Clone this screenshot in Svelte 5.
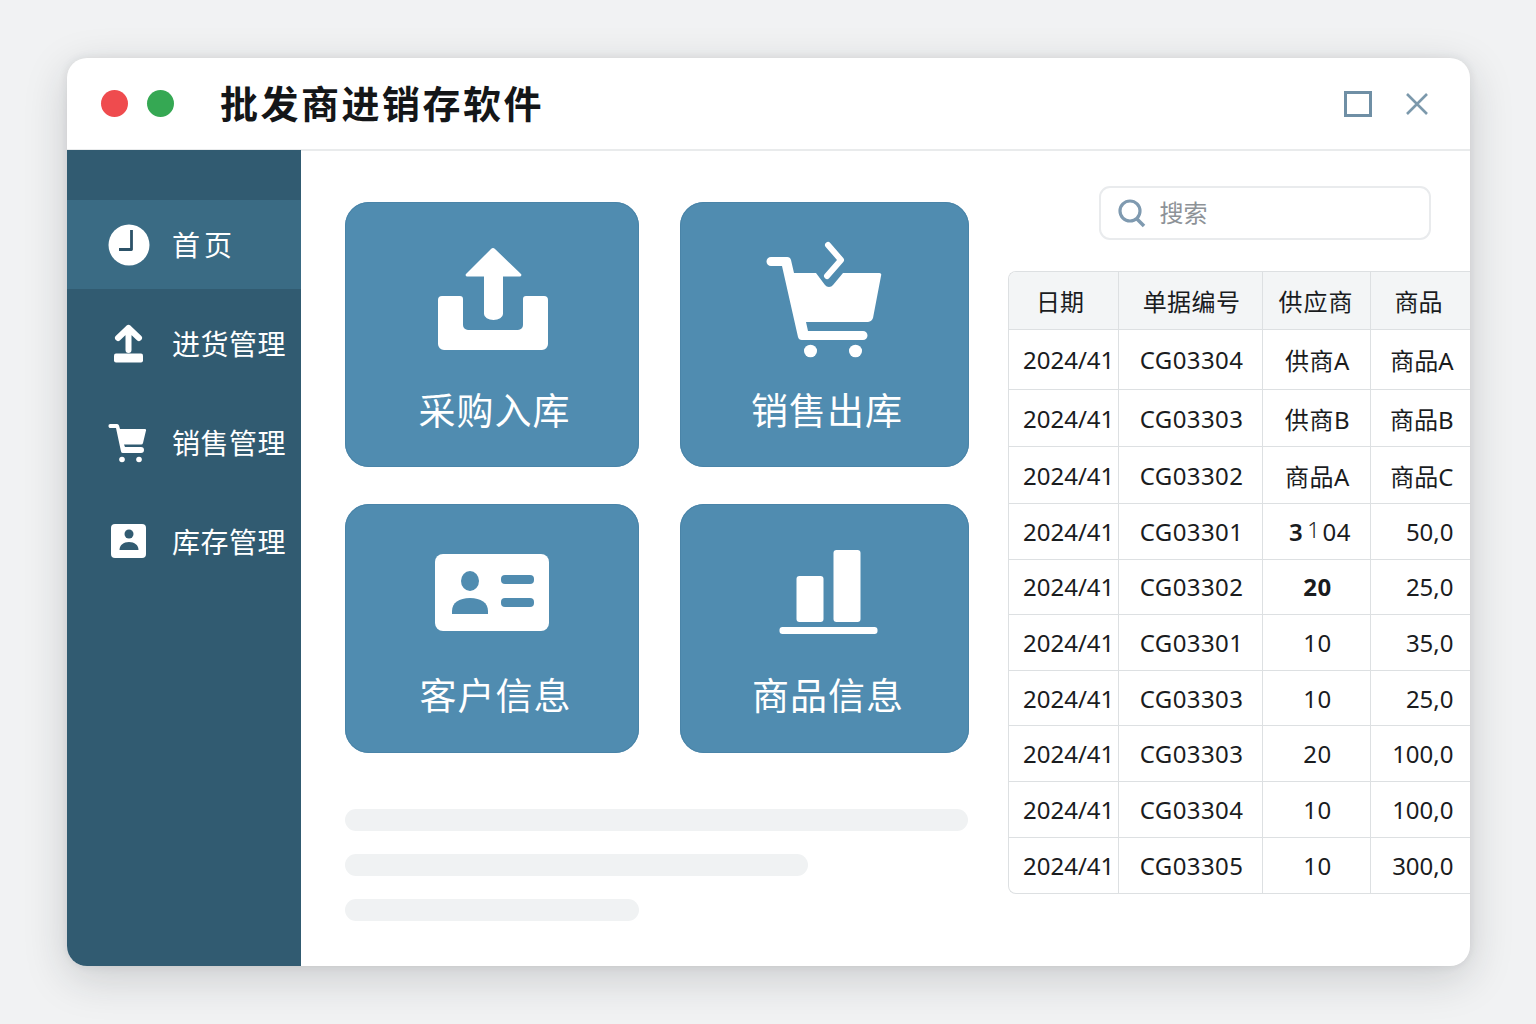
<script>
  const nav = ['首页', '进货管理', '销售管理', '库存管理'];
  const rows = [
    ['2024/41', 'CG03304', '供商A', '商品A', 'r1'],
    ['2024/41', 'CG03303', '供商B', '商品B', 'r2'],
    ['2024/41', 'CG03302', '商品A', '商品C', 'r2'],
    ['2024/41', 'CG03301', '3104', '50,0', ''],
    ['2024/41', 'CG03302', '20', '25,0', 'r5'],
    ['2024/41', 'CG03301', '10', '35,0', ''],
    ['2024/41', 'CG03303', '10', '25,0', ''],
    ['2024/41', 'CG03303', '20', '100,0', ''],
    ['2024/41', 'CG03304', '10', '100,0', ''],
    ['2024/41', 'CG03305', '10', '300,0', '']
  ];
</script>

<div class="page">
  <div class="window">
    <header class="titlebar">
      <span class="dot red"></span>
      <span class="dot green"></span>
      <h1>批发商进销存软件</h1>
      <div class="controls">
        <svg width="28" height="26" viewBox="0 0 28 26"><rect x="1.500" y="1.500" width="25" height="23" fill="none" stroke="#6f8fa5" stroke-width="3"/></svg>
        <svg width="24" height="24" viewBox="0 0 24 24"><path d="M2 2 22 22M22 2 2 22" fill="none" stroke="#7c99ac" stroke-width="2.600"/></svg>
      </div>
    </header>
    <div class="body">
      <aside class="sidebar">
        {#each nav as label, i}
          <div class="nav" class:active={i === 0}>
            <svg class="navicon" viewBox="0 0 42 42">
              {#if i === 0}
                <circle cx="21" cy="21" r="20.500" fill="#fff"/>
                <path d="M23.500 6v19.500H11" fill="none" stroke="#2c5268" stroke-width="2.800" stroke-linejoin="round"/>
              {:else if i === 1}
                <path d="M10 15 20.500 5 31 15M20.500 5V27" fill="none" stroke="#fff" stroke-width="6" stroke-linejoin="round" stroke-linecap="round"/>
                <rect x="6" y="30.500" width="29" height="9" rx="2" fill="#fff"/>
              {:else if i === 2}
                <path d="M2 2h7a2 2 0 0 1 2 1.500L12 7h25a1 1 0 0 1 1 1.500L35 21a2 2 0 0 1-2 1.500H16l1 2.500h16a2.500 2.500 0 0 1 0 6H15a2 2 0 0 1-2-1.500L8 6H3a2 2 0 0 1-1-4Z" fill="#fff"/>
                <circle cx="14" cy="37.500" r="2.800" fill="#fff"/>
                <circle cx="31" cy="37.500" r="2.800" fill="#fff"/>
              {:else}
                <rect x="3" y="3" width="35" height="34" rx="4" fill="#fff"/>
                <circle cx="21" cy="13" r="4.500" fill="#315b71"/>
                <path d="M11.500 29c0-5 4-8 9.500-8s9.500 3 9.500 8Z" fill="#315b71"/>
              {/if}
            </svg>
            <span class:wide={i === 0}>{label}</span>
          </div>
        {/each}
      </aside>
      <main class="main">
        <section class="left">
          <div class="grid">
            <div class="card">
              <svg class="icon" viewBox="0 0 120 120">
                <path d="M59 9a3 3 0 0 1 4 0l26 25a1.500 1.500 0 0 1-1 2.500H71V74a9.500 6 0 0 1-19 0V36.500H35a1.500 1.500 0 0 1-1-2.500Z" fill="#fff"/>
                <path d="M10 56h18a3 3 0 0 1 3 3v26a5 5 0 0 0 5 5h50a5 5 0 0 0 5-5V59a3 3 0 0 1 3-3h18a4 4 0 0 1 4 4v44a6 6 0 0 1-6 6H12a6 6 0 0 1-6-6V60a4 4 0 0 1 4-4Z" fill="#fff"/>
              </svg>
              <span>采购入库</span>
            </div>
            <div class="card">
              <svg class="icon" viewBox="0 0 120 120">
                <path d="M6 17H22a4 4 0 0 1 4 3L29 33H51L60 45a5 5 0 0 0 8 0L78 33H114a2 2 0 0 1 2 3L108 78a6 6 0 0 1-5 4H41L43 91H98a4.500 4.500 0 0 1 0 9H37a4 4 0 0 1-4-3L17 26H6a4.500 4.500 0 0 1 0-9Z" fill="#fff"/>
                <path d="M63 5 76 20 62 36" fill="none" stroke="#fff" stroke-width="6" stroke-linecap="round" stroke-linejoin="round"/>
                <ellipse cx="45.500" cy="111" rx="6.500" ry="6.300" fill="#fff"/>
                <ellipse cx="90.500" cy="111" rx="6.500" ry="6.300" fill="#fff"/>
              </svg>
              <span>销售出库</span>
            </div>
            <div class="card short">
              <svg class="icon" viewBox="0 0 120 96">
                <rect x="3" y="10" width="114" height="77" rx="8" fill="#fff"/>
                <ellipse cx="38" cy="37" rx="9" ry="10" fill="#508cb0"/>
                <path d="M20 70v-3c0-8 7-13 18-13s18 5 18 13v3Z" fill="#508cb0"/>
                <rect x="69" y="31" width="33" height="9" rx="4" fill="#508cb0"/>
                <rect x="69" y="54" width="33" height="9" rx="4" fill="#508cb0"/>
              </svg>
              <span>客户信息</span>
            </div>
            <div class="card short">
              <svg class="icon" viewBox="0 0 120 96">
                <rect x="31.500" y="32" width="27" height="46" rx="3" fill="#fff"/>
                <rect x="68.500" y="6" width="27" height="72" rx="3" fill="#fff"/>
                <rect x="14.500" y="83" width="98" height="7" rx="3" fill="#fff"/>
              </svg>
              <span>商品信息</span>
            </div>
          </div>
          <div class="bars">
            <div class="bar b1"></div>
            <div class="bar b2"></div>
            <div class="bar b3"></div>
          </div>
        </section>
        <section class="right">
          <div class="search">
            <svg width="28" height="30" viewBox="0 0 28 30"><circle cx="12" cy="13" r="10" fill="none" stroke="#7f9ab0" stroke-width="3.200"/><path d="M19 21 26 28" stroke="#7f9ab0" stroke-width="3.600"/></svg>
            <span>搜索</span>
          </div>
          <div class="tablewrap">
            <div class="row head">
              <div class="c c1 ctr">日期</div>
              <div class="c c2">单据编号</div>
              <div class="c c3 sp">供应商</div>
              <div class="c c4">商品</div>
            </div>
            {#each rows as r}
              <div class="row {r[4]}">
                <div class="c c1">{r[0]}</div>
                <div class="c c2">{r[1]}</div>
                <div class="c c3 val">
                  {#if r[2] === '3104'}<span class="three">3</span><span class="one">1</span>04{:else}{r[2]}{/if}
                </div>
                <div class="c c4 end">{r[3]}</div>
              </div>
            {/each}
          </div>
        </section>
      </main>
    </div>
  </div>
</div>

<style>
  :global(body) { margin: 0; background: #f1f2f3; }
  .page { width: 1536px; height: 1024px; padding: 58px 0 0 67px; box-sizing: border-box; font-family: "Noto Sans CJK SC", "Noto Sans", sans-serif; }
  .window { width: 1403px; height: 908px; background: #fff; border-radius: 20px; overflow: hidden; box-shadow: 0 12px 44px rgba(30, 35, 40, .18), 0 0 10px rgba(30, 35, 40, .09); display: flex; flex-direction: column; }
  .titlebar { height: 91px; flex: none; display: flex; align-items: center; padding-left: 34px; padding-right: 41px; border-bottom: 2px solid #e9ebec; box-sizing: content-box; }
  .dot { width: 27px; height: 27px; border-radius: 50%; margin-right: 19px; }
  .red { background: #ef4b4e; }
  .green { background: #35a853; margin-right: 46px; }
  h1 { margin: 0 0 3px; font-size: 38px; font-weight: 700; letter-spacing: 2.500px; color: #141618; line-height: 1; }
  .controls { margin-left: auto; display: flex; align-items: center; gap: 33px; }
  .body { flex: 1; display: flex; min-height: 0; margin-top: -1px; }
  .sidebar { width: 234px; flex: none; background: #315b71; padding-top: 50px; display: flex; flex-direction: column; gap: 10px; box-sizing: border-box; }
  .nav { height: 89px; display: flex; align-items: center; padding-left: 41px; gap: 22px; color: #fff; font-size: 28px; letter-spacing: .500px; }
  .nav span { white-space: nowrap; margin-bottom: 1px; }
  .nav span.wide { letter-spacing: 4px; }
  .nav.active { background: #3a6b84; }
  .navicon { width: 42px; height: 42px; flex: none; }
  .main { flex: 1; display: flex; min-width: 0; padding-left: 44px; padding-top: 36px; }
  .left { width: 624px; flex: none; padding-top: 16px; }
  .grid { display: grid; grid-template-columns: 294px 289px; grid-template-rows: 265px 249px; gap: 37px 41px; }
  .card { background: #508cb0; border-radius: 24px; color: #fff; display: flex; flex-direction: column; align-items: center; font-size: 37px; padding-top: 38px; box-sizing: border-box; box-shadow: inset 0 0 0 1px #4a84a8; }
  .card span { line-height: 50px; margin-top: 24px; margin-left: 5px; letter-spacing: 1px; }
  .card .icon { width: 120px; height: 120px; flex: none; }
  .card.short { padding-top: 40px; }
  .card.short .icon { height: 96px; }
  .card.short span { margin-top: 29px; margin-left: 7px; }
  .bars { margin-top: 56px; display: flex; flex-direction: column; gap: 23px; }
  .bar { height: 22px; border-radius: 11px; background: #f0f2f3; }
  .b1 { width: 623px; }
  .b2 { width: 463px; }
  .b3 { width: 294px; }
  .right { flex: 1; min-width: 0; margin-left: 38.500px; }
  .search { margin-left: 91px; width: 332px; height: 54px; box-sizing: border-box; border: 2px solid #e9ebed; border-radius: 11px; display: flex; align-items: center; padding-left: 17px; gap: 14px; color: #8d9297; font-size: 24px; }
  .search span { margin-bottom: 3px; }
  .tablewrap { margin-top: 31px; border: 1px solid #dde0e2; border-right: 0; border-radius: 8px 0 0 8px; overflow: hidden; color: #1a1c1e; font-size: 24px; font-family: "Noto Sans", "Noto Sans CJK SC", sans-serif; }
  .row { display: flex; height: 55.600px; border-bottom: 1px solid #dde0e2; box-sizing: border-box; }
  .row:last-child { border-bottom: 0; }
  .row.head { height: 58px; background: #f3f5f6; }
  .row.r1 { height: 60px; }
  .row.r2 { height: 57px; }
  .row.r5 .c3 { font-weight: 700; }
  .c { display: flex; align-items: center; justify-content: center; border-right: 1px solid #dde0e2; box-sizing: border-box; white-space: nowrap; flex: none; }
  .c1 { width: 110px; justify-content: flex-start; padding-left: 14.500px; }
  .c1.ctr { justify-content: center; padding-left: 0; padding-right: 6px; }
  .c2 { width: 144px; letter-spacing: .400px; padding-left: 3px; }
  .c3 { width: 108px; }
  .c3.val { padding-left: 3px; letter-spacing: .600px; }
  .c3.sp { letter-spacing: 1px; }
  .c4 { width: 98px; border-right: 0; padding-right: 2px; }
  .c4.end { justify-content: flex-end; padding-right: 15px; }
  .three { font-weight: 600; margin-right: 4px; margin-left: 5px; }
  .one { font-weight: 300; font-size: 22px; margin-right: 2px; margin-bottom: 4px; }
</style>
